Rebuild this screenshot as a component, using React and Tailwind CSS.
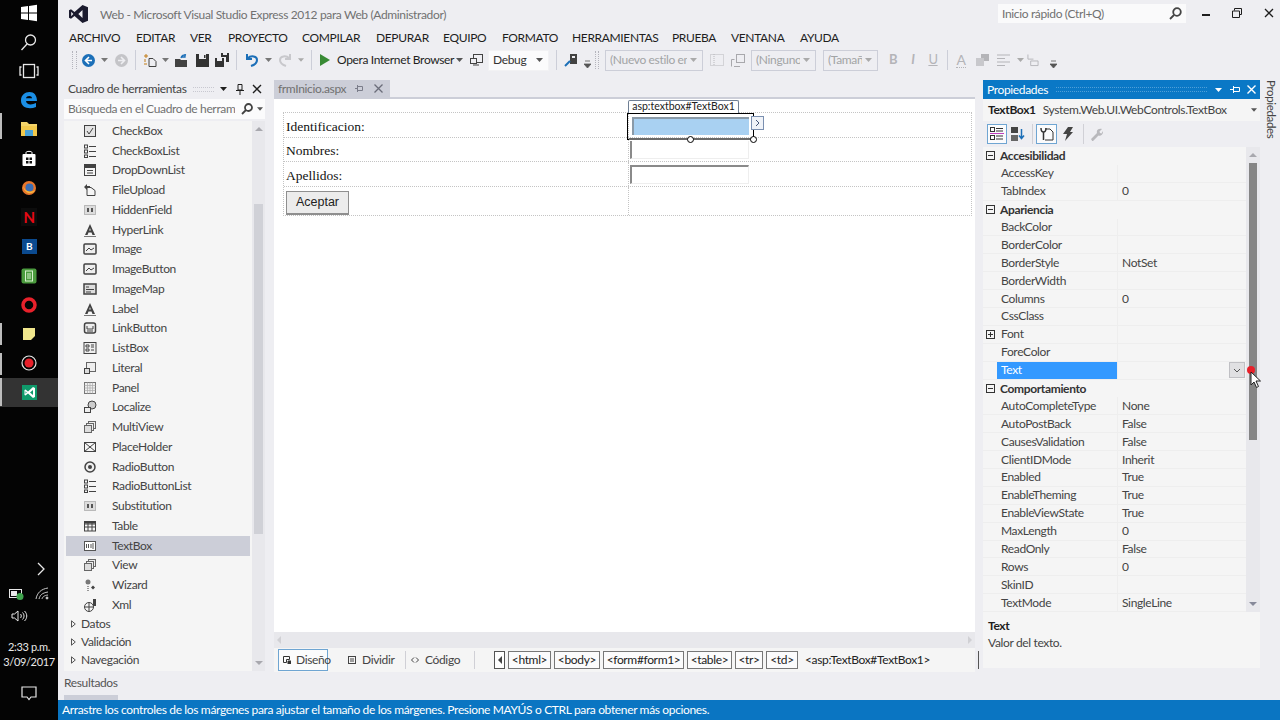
import React from "react";

const FONT = "font-['Lato','Liberation_Sans',sans-serif] tracking-[-0.35px]";

const MENU = [
  ["ARCHIVO", "w-[67px]"],
  ["EDITAR", "w-[54px]"],
  ["VER", "w-[38px]"],
  ["PROYECTO", "w-[74px]"],
  ["COMPILAR", "w-[74px]"],
  ["DEPURAR", "w-[67px]"],
  ["EQUIPO", "w-[59px]"],
  ["FORMATO", "w-[70px]"],
  ["HERRAMIENTAS", "w-[100px]"],
  ["PRUEBA", "w-[59px]"],
  ["VENTANA", "w-[69px]"],
  ["AYUDA", "w-[50px]"],
];

const TOOLS = [
  ["CheckBox", "check"], ["CheckBoxList", "list"], ["DropDownList", "drop"], ["FileUpload", "upload"],
  ["HiddenField", "hidden"], ["HyperLink", "letter"], ["Image", "image"], ["ImageButton", "image"],
  ["ImageMap", "map"], ["Label", "letter"], ["LinkButton", "link"], ["ListBox", "listbox"],
  ["Literal", "literal"], ["Panel", "panel"], ["Localize", "localize"], ["MultiView", "multi"],
  ["PlaceHolder", "place"], ["RadioButton", "radio"], ["RadioButtonList", "list"], ["Substitution", "hidden"],
  ["Table", "table"], ["TextBox", "textbox"], ["View", "multi"], ["Wizard", "wizard"], ["Xml", "xml"],
];

const PROPS = [
  { cat: "Accesibilidad" }, { n: "AccessKey" }, { n: "TabIndex", v: "0" },
  { cat: "Apariencia" }, { n: "BackColor" }, { n: "BorderColor" }, { n: "BorderStyle", v: "NotSet" },
  { n: "BorderWidth" }, { n: "Columns", v: "0" }, { n: "CssClass" }, { n: "Font", plus: true },
  { n: "ForeColor" }, { n: "Text", sel: true },
  { cat: "Comportamiento" }, { n: "AutoCompleteType", v: "None" }, { n: "AutoPostBack", v: "False" },
  { n: "CausesValidation", v: "False" }, { n: "ClientIDMode", v: "Inherit" }, { n: "Enabled", v: "True" },
  { n: "EnableTheming", v: "True" }, { n: "EnableViewState", v: "True" }, { n: "MaxLength", v: "0" },
  { n: "ReadOnly", v: "False" }, { n: "Rows", v: "0" }, { n: "SkinID" }, { n: "TextMode", v: "SingleLine" },
];

const TRAIL = [
  ["<html>", "w-[43px]"], ["<body>", "w-[46px]"], ["<form#form1>", "w-[81px]"],
  ["<table>", "w-[45px]"], ["<tr>", "w-[28px]"], ["<td>", "w-[32px]"],
];

const ToolIcon = ({ type }) => {
  const c = "#424242";
  const shapes = {
    check: <><rect x="2.5" y="2.5" width="11" height="11" fill="#e4e4e4" stroke={c} /><path d="M5 8l2 3 4-6" fill="none" stroke={c} /></>,
    list: <><rect x="2.5" y="2" width="3" height="3" fill="none" stroke={c} /><rect x="2.5" y="7" width="3" height="3" fill="none" stroke={c} /><rect x="2.5" y="12" width="3" height="2.5" fill="none" stroke={c} /><path d="M7 3.5h7M7 8.5h7M7 13.5h7" stroke={c} /></>,
    drop: <><rect x="2.5" y="2.5" width="11" height="11" fill="none" stroke={c} /><rect x="2.5" y="2.5" width="11" height="3.5" fill={c} /><path d="M5 8.5h6M5 11h6" stroke={c} /></>,
    upload: <><path d="M5 5.5h4l4 3v5H5z" fill="none" stroke={c} /><path d="M2 5l3-3v2h3v2H5v2z" fill={c} /></>,
    hidden: <><rect x="2.5" y="3.5" width="11" height="9" fill="#ddd" stroke="#888" strokeDasharray="1 1" /><path d="M5 6h2v4H5zM9 6h2v4H9z" fill="#555" /></>,
    letter: <><path d="M8 2L3 13h2.5l1-2.5h3l1 2.5H13zM7.2 8.5L8 6l.8 2.5z" fill={c} /><path d="M2 14.5h12" stroke="#777" /></>,
    image: <><rect x="2" y="3" width="12" height="10" rx="1" fill="#eee" stroke={c} strokeWidth="1.5" /><path d="M4 10l3-3 2 2 3-2" fill="none" stroke={c} /></>,
    map: <><rect x="2" y="3" width="12" height="10" fill="#ddd" stroke={c} strokeWidth="1.5" /><path d="M4 6h3M4 8.5h8M4 11h5" stroke={c} /></>,
    link: <><rect x="2.5" y="3" width="11" height="10" rx="2" fill="#eee" stroke={c} strokeWidth="1.5" /><path d="M5 6v3h6V6M5 11h6" fill="none" stroke={c} /></>,
    listbox: <><rect x="2" y="2.5" width="12" height="11" fill="#eee" stroke={c} /><path d="M4 5h3v2H4zM4 9h3v2H4zM9 5h3M9 7h3M9 10h3" fill="none" stroke={c} /></>,
    literal: <><rect x="4.5" y="2.5" width="9" height="9" fill="#eee" stroke="#666" /><rect x="2.5" y="8.5" width="5" height="5" fill="#ddd" stroke={c} /></>,
    panel: <><rect x="2.5" y="2.5" width="11" height="11" fill="#eee" stroke="#777" /><path d="M2.5 5.5h11M2.5 8h11M2.5 10.5h11M5.5 2.5v11M8 2.5v11M10.5 2.5v11" stroke="#aaa" strokeWidth=".7" /></>,
    localize: <><circle cx="10" cy="6" r="4" fill="#ccc" stroke={c} /><rect x="2.5" y="8.5" width="6" height="5" fill="#eee" stroke={c} /></>,
    multi: <><rect x="6.5" y="2.5" width="7" height="7" fill="#eee" stroke="#666" /><rect x="4.5" y="4.5" width="7" height="7" fill="#eee" stroke="#666" /><rect x="2.5" y="6.5" width="7" height="7" fill="#ddd" stroke="#666" /></>,
    place: <><rect x="2.5" y="3.5" width="11" height="9" fill="none" stroke={c} /><path d="M2.5 3.5l11 9M13.5 3.5l-11 9" stroke={c} /></>,
    radio: <><circle cx="8" cy="8" r="5" fill="#eee" stroke={c} strokeWidth="1.5" /><circle cx="8" cy="8" r="2" fill={c} /></>,
    table: <><rect x="2.5" y="3.5" width="11" height="9.5" fill="none" stroke={c} /><path d="M2.5 6h11M2.5 9h11M6 4v9M10 4v9" stroke={c} /><rect x="2.5" y="3.5" width="11" height="2" fill={c} /></>,
    textbox: <><rect x="2.5" y="3.5" width="11" height="9" fill="#fff" stroke="#555" /><path d="M4.5 6v4M6.5 6v4M9 6v4M11 5v6" stroke="#555" /></>,
    wizard: <><circle cx="6" cy="5" r="2.5" fill="#777" /><path d="M6 9v5" stroke="#777" strokeWidth="1.5" strokeDasharray="1 1" /><path d="M11 8.5l2 2-2 2-2-2z" fill={c} /></>,
    xml: <><circle cx="7" cy="10" r="4.5" fill="none" stroke={c} /><path d="M2.5 10h9M7 5.5v9" stroke={c} /><rect x="11" y="2" width="3" height="7" fill={c} /></>,
  };
  return (
    <svg width="16" height="16" viewBox="0 0 16 16" className="shrink-0">
      {shapes[type]}
    </svg>
  );
};

// small slot of the taskbar
const TaskIcon = ({ children, active }) => (
  <div className={`h-[29.23px] w-full flex items-center justify-center ${active ? "bg-[#333333]" : ""}`}>
    {children}
  </div>
);

const Drop = ({ color = "#555555" }) => (
  <svg width="7" height="4" viewBox="0 0 7 4"><path d="M0 0h7L3.500 4z" fill={color} /></svg>
);

// slot of the main toolbar
const Tb = ({ w, children }) => (
  <div className={`${w} h-full shrink-0 flex items-center justify-center`}>{children}</div>
);

const Sep = ({ w }) => (
  <div className={`${w} h-full shrink-0 flex items-center justify-center`}>
    <div className="w-px h-[20px] bg-[#ccced8]" />
  </div>
);

const Grip = ({ w }) => (
  <div className={`${w} h-full shrink-0 flex items-center justify-center`}>
    <div className="w-[5px] h-[18px] border-x border-dotted border-[#b4b4bc]" />
  </div>
);

const Combo = ({ w, text, disabled, extra = "" }) => (
  <div className={`${w} ${extra} h-[21px] shrink-0 flex items-center pl-[4px] pr-[5px] border ${disabled ? "border-[#ccced8] text-[#a2a4a5]" : "border-[#f2f2f4] bg-[#fbfbfc] text-[#333333]"}`}>
    <span className="flex-1 min-w-0 overflow-hidden whitespace-nowrap">{text}</span>
    <span className="ml-[3px] flex"><Drop color={disabled ? "#aaaaaa" : "#555555"} /></span>
  </div>
);

const Sidebar = () => (
  <div className="w-[58px] h-full shrink-0 bg-[#040404] flex flex-col text-white relative">
    <div className="-mt-[2px]">
      <TaskIcon>
        <svg width="18" height="18" viewBox="0 0 18 18"><path d="M1 3l7-1v6.500H1zM9 1.900l8-1.200V8.500H9zM1 9.500h7V16l-7-1zM9 9.500h8v7.800l-8-1.200z" fill="#ffffff" /></svg>
      </TaskIcon>
      <TaskIcon>
        <svg width="18" height="18" viewBox="0 0 18 18" fill="none" stroke="#e8e8e8" strokeWidth="1.300"><circle cx="10.500" cy="7" r="5" /><path d="M7 11l-5.500 6" /></svg>
      </TaskIcon>
      <TaskIcon>
        <svg width="20" height="16" viewBox="0 0 20 16" fill="none" stroke="#e8e8e8" strokeWidth="1.300"><rect x="4.500" y="1.500" width="11" height="13" /><path d="M2.500 4H1v8h1.500M17.500 4H19v8h-1.500" /></svg>
      </TaskIcon>
      <TaskIcon>
        <svg width="18" height="18" viewBox="0 0 18 18"><path d="M1 9.500C1 4 5 1 9.500 1 14 1 17 4.300 17 10H6c.3 3.500 5 4.500 10 2v4c-6 2.500-15 1.500-15-6.500zM6 7.300h6c0-3-5.500-3-6 0z" fill="#1b8fe6" /></svg>
      </TaskIcon>
      <TaskIcon>
        <svg width="18" height="16" viewBox="0 0 18 16"><path d="M1 1h6l2 2h8v3H1z" fill="#f4d46a" /><rect x="1" y="5" width="16" height="10" fill="#f2c94c" /><rect x="5" y="9" width="8" height="6" fill="#4aa3d8" /></svg>
      </TaskIcon>
      <TaskIcon>
        <svg width="16" height="17" viewBox="0 0 16 17"><path d="M5 4V2.500C5 1 11 1 11 2.500V4" fill="none" stroke="#ffffff" /><rect x="1.500" y="4" width="13" height="12" rx="1" fill="#ffffff" /><path d="M5 7.500h2.500V10H5zM8.500 7.500H11V10H8.500zM5 11h2.500v2.500H5zM8.500 11H11v2.500H8.500z" fill="#111111" /></svg>
      </TaskIcon>
      <TaskIcon>
        <svg width="16" height="16" viewBox="0 0 16 16"><circle cx="8" cy="8" r="7" fill="#e8762c" /><circle cx="8.500" cy="7.500" r="4" fill="#3b6fb5" /><path d="M2 5c1 5 6 9 12 5-2 5-11 5-12-5z" fill="#f6b73c" /></svg>
      </TaskIcon>
      <TaskIcon>
        <div className="w-[16px] h-[18px] bg-[#0c0c0c] flex items-center justify-center text-[#e50914] text-[15px] font-bold leading-none">N</div>
      </TaskIcon>
      <TaskIcon>
        <div className="w-[15px] h-[15px] bg-[#0b4a8f] flex items-center justify-center text-white text-[10px] font-bold leading-none">B</div>
      </TaskIcon>
      <TaskIcon>
        <svg width="16" height="16" viewBox="0 0 16 16"><rect x="0.500" y="0.500" width="15" height="15" rx="2" fill="#4b9b3e" /><rect x="4.500" y="3" width="7" height="10" fill="none" stroke="#d9f0d0" /><path d="M6 6h4M6 8h4M6 10h4" stroke="#d9f0d0" /></svg>
      </TaskIcon>
      <TaskIcon>
        <svg width="16" height="16" viewBox="0 0 16 16"><circle cx="8" cy="8" r="6" fill="none" stroke="#e8212b" strokeWidth="3.500" /></svg>
      </TaskIcon>
      <TaskIcon>
        <svg width="13" height="13" viewBox="0 0 13 13"><path d="M0 0h12v8l-4 4H0z" fill="#f0e68c" /></svg>
      </TaskIcon>
      <TaskIcon>
        <svg width="16" height="16" viewBox="0 0 16 16"><circle cx="8" cy="8" r="7" fill="none" stroke="#e8e8e8" strokeWidth="1.200" /><circle cx="8" cy="8" r="4.500" fill="#e8202a" /></svg>
      </TaskIcon>
      <TaskIcon active>
        <svg width="15" height="15" viewBox="0 0 15 15"><rect width="15" height="15" fill="#0f9a6b" /><path d="M11 2L6 6.500 3.500 4.500 2.500 5v5l1 .5L6 8.500l5 4.500 2-1V3zM11 5v5L8 7.500zM3.500 6.300l1.300 1.200-1.300 1.200z" fill="#ffffff" /></svg>
      </TaskIcon>
    </div>

    {/* running indicators */}
    <div className="absolute left-0 top-[113px] w-[2px] h-[26px] bg-[#bdbdbd]" />
    <div className="absolute left-0 top-[323px] w-[2px] h-[22px] bg-[#bdbdbd]" />
    <div className="absolute left-0 top-[353px] w-[2px] h-[22px] bg-[#bdbdbd]" />
    <div className="absolute left-0 top-[378px] w-[2px] h-[28px] bg-[#bdbdbd]" />

    {/* tray */}
    <div className="mt-auto flex flex-col items-center pb-[19px]">
      <svg width="10" height="14" viewBox="0 0 10 14" className="ml-[24px]" fill="none" stroke="#e8e8e8" strokeWidth="1.300"><path d="M2 1l6 6-6 6" /></svg>
      <div className="flex items-center gap-[10px] mt-[11px]">
        <svg width="16" height="12" viewBox="0 0 16 12"><rect x="0.500" y="1.500" width="12" height="8" fill="none" stroke="#e8e8e8" /><rect x="2" y="3" width="6" height="5" fill="#e8e8e8" /><circle cx="11" cy="8.500" r="3.500" fill="#3fa34d" /></svg>
        <svg width="14" height="13" viewBox="0 0 14 13" fill="none" stroke="#c8c8c8"><path d="M1 12C2 6 6 2 13 1M4 12c1-4 3-6 9-7M7 12c.5-2 2-3.500 6-4" /><circle cx="12" cy="11" r="1" fill="#e8e8e8" /></svg>
      </div>
      <svg width="17" height="14" viewBox="0 0 17 14" className="mt-[9px] mr-[20px]" fill="none" stroke="#e8e8e8"><path d="M1 5h2.500L7 2v10L3.500 9H1zM9.500 5c1 1 1 3 0 4M11.500 3.500c2 2 2 5 0 7M13.500 2c3 3 3 7 0 10" /></svg>
      <div className="text-[11px] leading-[15px] text-[#e8e8e8] mt-[16px] text-center whitespace-nowrap">
        <div>2:33 p.m.</div>
        <div>3/09/2017</div>
      </div>
      <svg width="16" height="15" viewBox="0 0 16 15" className="mt-[17px]" fill="none" stroke="#e8e8e8" strokeWidth="1.200"><path d="M1 1h14v10h-5l-2 2.500L6 11H1z" /></svg>
    </div>
  </div>
);

const TitleBar = () => (
  <div className="h-[27px] flex items-center shrink-0">
    <svg width="19" height="18" viewBox="0 0 19 18" className="ml-[11px]">
      <path d="M13.500 0L19 2.300v13.400L13.500 18 5.500 11 2 13.800 0 12.800V5.200l2-1L5.500 7zM13.500 5L9.300 9l4.200 4zM2.200 6.800v4.400L4.300 9z" fill="#1a1a2e" />
    </svg>
    <span className="ml-[12px] mt-[2px] text-[12px] text-[#717171]">Web - Microsoft Visual Studio Express 2012 para Web (Administrador)</span>
    <div className="ml-auto w-[188px] h-[19px] bg-[#fafafb] flex items-center px-[4px] text-[12px] text-[#717171]">
      <span className="flex-1">Inicio rápido (Ctrl+Q)</span>
      <svg width="13" height="13" viewBox="0 0 13 13" fill="none" stroke="#444444" strokeWidth="1.800"><circle cx="8" cy="5" r="3.800" /><path d="M5 8l-4 4" /></svg>
    </div>
    <div className="w-[94px] h-full flex items-center -mt-[1px]">
      <div className="w-[8px] h-[2px] bg-[#1e1e1e] ml-[16px] mt-[3px]" />
      <svg width="10" height="10" viewBox="0 0 10 10" className="ml-[22px]" fill="none" stroke="#1e1e1e"><path d="M2.500 2.500v-2h7v6h-2M.5 3h7v6.500h-7z" /></svg>
      <svg width="10" height="10" viewBox="0 0 10 10" className="ml-[22px]" fill="none" stroke="#1e1e1e" strokeWidth="1.300"><path d="M1 1l8 8M9 1l-8 8" /></svg>
    </div>
  </div>
);

const MenuBar = () => (
  <div className="h-[20px] shrink-0 flex items-center pl-[11px] pt-[2px] text-[12px] text-[#1e1e1e]">
    {MENU.map(([label, w]) => (
      <div key={label} className={`${w} shrink-0 whitespace-nowrap`}>{label}</div>
    ))}
  </div>
);

const Toolbar = () => (
  <div className="h-[26px] shrink-0 flex items-center pl-[10px] text-[12px]">
    <Grip w="w-[12px]" />
    <Tb w="w-[16px]">
      <svg width="13" height="13" viewBox="0 0 13 13"><circle cx="6.500" cy="6.500" r="6.500" fill="#1c6fb8" /><path d="M7 3L3.500 6.500 7 10M4 6.500h6" fill="none" stroke="#ffffff" strokeWidth="1.600" /></svg>
    </Tb>
    <Tb w="w-[16px]"><Drop color="#777777" /></Tb>
    <Tb w="w-[18px]">
      <svg width="13" height="13" viewBox="0 0 13 13"><circle cx="6.500" cy="6.500" r="6.500" fill="#c4c4c8" /><path d="M6 3l3.500 3.500L6 10M9 6.500H3" fill="none" stroke="#eeeef2" strokeWidth="1.600" /></svg>
    </Tb>
    <Sep w="w-[10px]" />
    <Tb w="w-[20px]">
      <svg width="14" height="14" viewBox="0 0 14 14" fill="none" stroke="#424242"><path d="M6 5.500h4l3 3v5H6z" /><path d="M1 3h4M3 1v4M2 6v3M1 11h3" stroke="#c27d16" /></svg>
    </Tb>
    <Tb w="w-[10px]"><Drop color="#777777" /></Tb>
    <Tb w="w-[22px]">
      <svg width="14" height="13" viewBox="0 0 14 13"><path d="M1 5h5l1 1h6v7H1z" fill="#424242" /><path d="M7 4a4 4 0 0 1 5-3M11 0v3H8" fill="none" stroke="#1c6fb8" strokeWidth="1.300" /></svg>
    </Tb>
    <Tb w="w-[20px]">
      <svg width="13" height="13" viewBox="0 0 13 13"><path d="M0 0h13v13H0z" fill="#333333" /><path d="M3 0h7v5H3z" fill="#eeeef2" /><path d="M8 1h1.500v3H8zM3 9h7v4H3z" fill="#333333" /></svg>
    </Tb>
    <Tb w="w-[20px]">
      <svg width="14" height="14" viewBox="0 0 14 14"><path d="M0 5h9v9H0z" fill="#333333" /><path d="M2 5h5v3H2z" fill="#eeeef2" /><path d="M6 0h8v9h-3V4H6z" fill="#333333" /><path d="M8 0h4v2H8z" fill="#eeeef2" /></svg>
    </Tb>
    <Sep w="w-[8px]" />
    <Tb w="w-[24px]">
      <svg width="14" height="14" viewBox="0 0 14 14" fill="none" stroke="#1c6fb8" strokeWidth="2"><path d="M2 1v5h5" /><path d="M2.500 5.500C6 2 12 3 12 7c0 3-3 5-6 6" /></svg>
    </Tb>
    <Tb w="w-[8px]"><Drop color="#777777" /></Tb>
    <Tb w="w-[26px]">
      <svg width="14" height="14" viewBox="0 0 14 14" fill="none" stroke="#c8c8cc" strokeWidth="2"><path d="M12 1v5H7" /><path d="M11.500 5.500C8 2 2 3 2 7c0 3 3 5 6 6" /></svg>
    </Tb>
    <Tb w="w-[6px]"><Drop color="#aaaaaa" /></Tb>
    <Sep w="w-[14px]" />
    <Tb w="w-[14px]">
      <svg width="10" height="12" viewBox="0 0 10 12"><path d="M0 0l10 6-10 6z" fill="#388a34" /></svg>
    </Tb>
    <div className="w-[114px] ml-[5px] shrink-0 whitespace-nowrap text-[#1e1e1e]">Opera Internet Browser</div>
    <Tb w="w-[16px]"><Drop /></Tb>
    <Tb w="w-[18px]">
      <svg width="13" height="12" viewBox="0 0 13 12" fill="none" stroke="#424242"><rect x="3.500" y="0.500" width="9" height="8" /><rect x="0.500" y="4.500" width="6" height="5" fill="#eeeef2" /><path d="M3 11h6" /></svg>
    </Tb>
    <Combo w="w-[61px]" extra="ml-[3px]" text="Debug" />
    <Sep w="w-[14px]" />
    <Tb w="w-[16px]">
      <svg width="14" height="14" viewBox="0 0 14 14"><path d="M6 1h7v10H6z" fill="#424242" /><path d="M1 13l5-5" stroke="#1c6fb8" strokeWidth="2" /><path d="M8 3h3v2H8z" fill="#eeeef2" /></svg>
    </Tb>
    <Tb w="w-[16px]">
      <svg width="7" height="8" viewBox="0 0 7 8" className="mt-[8px]"><path d="M1 1h5M0 4h7L3.500 8z" stroke="#555555" fill="#555555" strokeWidth=".8" /></svg>
    </Tb>
    <Grip w="w-[4px]" />
    <Combo w="w-[98px]" extra="ml-[6px]" text="(Nuevo estilo en" disabled />
    <Tb w="w-[28px]">
      <svg width="14" height="12" viewBox="0 0 14 12" fill="none" stroke="#b8b8bc" strokeDasharray="1 1"><rect x="0.500" y="0.500" width="13" height="11" /><path d="M4 0v12" /></svg>
    </Tb>
    <Tb w="w-[14px]">
      <svg width="14" height="13" viewBox="0 0 14 13" fill="none" stroke="#a8a8ac"><rect x="5.500" y="0.500" width="8" height="8" /><path d="M0.500 12.500v-7h3M3 12.500h6" /></svg>
    </Tb>
    <Combo w="w-[65px]" extra="ml-[6px]" text="(Ninguno)" disabled />
    <Combo w="w-[55px]" extra="ml-[7px]" text="(Tamaño" disabled />
    <div className="w-[5px] shrink-0" />
    <Tb w="w-[20px]"><span className="font-bold text-[13px] text-[#b4b4b8]">B</span></Tb>
    <Tb w="w-[20px]"><span className="italic font-bold text-[13px] text-[#b4b4b8]">I</span></Tb>
    <Tb w="w-[20px]"><span className="underline text-[13px] text-[#b4b4b8]">U</span></Tb>
    <Sep w="w-[8px]" />
    <Tb w="w-[20px]"><span className="text-[14px] text-[#b4b4b8] border-b border-dotted border-[#b4b4b8] leading-[15px]">A</span></Tb>
    <Tb w="w-[22px]">
      <svg width="13" height="12" viewBox="0 0 13 12"><rect x="5" y="0" width="8" height="7" fill="#b4b4b8" /><rect x="0" y="4" width="8" height="8" fill="#c8c8cc" /></svg>
    </Tb>
    <Tb w="w-[20px]">
      <svg width="13" height="12" viewBox="0 0 13 12" stroke="#b4b4b8"><path d="M0 1h13M0 4.500h8M0 8h13M0 11.500h8" /></svg>
    </Tb>
    <Tb w="w-[14px]"><Drop color="#aaaaaa" /></Tb>
    <Tb w="w-[12px]">
      <svg width="13" height="13" viewBox="0 0 13 13" fill="none" stroke="#b4b4b8"><path d="M1 0v5h6M4 7h8v5H4z" /></svg>
    </Tb>
    <div className="w-[6px] shrink-0" />
    <Tb w="w-[16px]">
      <svg width="7" height="8" viewBox="0 0 7 8" className="mt-[8px]"><path d="M1 1h5M0 4h7L3.500 8z" stroke="#555555" fill="#555555" strokeWidth=".8" /></svg>
    </Tb>
  </div>
);

const ToolboxPanel = () => (
  <div className="w-[201px] ml-[6px] shrink-0 flex flex-col text-[12px] text-[#444444]">
    <div className="h-[18px] shrink-0 flex items-center pl-[4px] pr-[3px] text-[#444444]">
      <span className="whitespace-nowrap">Cuadro de herramientas</span>
      <div className="flex-1 h-[5px] mx-[6px] border-y border-dotted border-[#c8c8d0]" />
      <svg width="7" height="4" viewBox="0 0 7 4"><path d="M0 0h7L3.500 4z" fill="#1e1e1e" /></svg>
      <svg width="8" height="11" viewBox="0 0 8 11" className="ml-[9px]" fill="none" stroke="#1e1e1e"><path d="M2 .5h4V6H2zM0 6.500h8M4 6.500V11" /></svg>
      <svg width="10" height="10" viewBox="0 0 10 10" className="ml-[8px]" fill="none" stroke="#1e1e1e" strokeWidth="1.400"><path d="M1 1l8 8M9 1l-8 8" /></svg>
    </div>
    <div className="h-[20px] mt-px shrink-0 bg-[#fbfbfc] flex items-center pl-[4px] pr-[2px] text-[#717171]">
      <span className="flex-1 whitespace-nowrap overflow-hidden">Búsqueda en el Cuadro de herram</span>
      <svg width="12" height="12" viewBox="0 0 12 12" className="ml-[6px]" fill="none" stroke="#424242" strokeWidth="1.800"><circle cx="7.500" cy="4.500" r="3.500" /><path d="M5 7l-4 4" /></svg>
      <svg width="6" height="4" viewBox="0 0 7 4" className="ml-[4px]"><path d="M0 0h7L3.500 4z" fill="#555555" /></svg>
    </div>
    <div className="h-[550px] mt-[2px] shrink-0 flex bg-[#f5f5f5]">
      <div className="w-[186px] shrink-0 pl-[2px]">
        {TOOLS.map(([name, icon]) => (
          <div key={name} className={`h-[19.75px] flex items-center pl-[16px] ${name === "TextBox" ? "bg-[#ccced8]" : ""}`}>
            <ToolIcon type={icon} />
            <span className="ml-[14px] text-[#444444]">{name}</span>
          </div>
        ))}
        {["Datos", "Validación", "Navegación"].map((g) => (
          <div key={g} className="h-[18px] flex items-center pl-[5px]">
            <svg width="5" height="8" viewBox="0 0 5 8" fill="none" stroke="#555555"><path d="M.5.800L4.300 4 .5 7.200z" /></svg>
            <span className="ml-[5px]">{g}</span>
          </div>
        ))}
      </div>
      <div className="ml-auto w-[13px] bg-[#e8e8ec] flex flex-col items-center">
        <svg width="8" height="4" viewBox="0 0 8 4" className="mt-[6px]"><path d="M0 4h8L4 0z" fill="#a8a8ae" /></svg>
        <div className="w-[9px] h-[330px] mt-[73px] bg-[#d0d1d7]" />
        <svg width="8" height="4" viewBox="0 0 8 4" className="mt-auto mb-[6px]"><path d="M0 0h8L4 4z" fill="#a8a8ae" /></svg>
      </div>
    </div>
    <div className="flex-1 flex flex-col">
      <div className="flex-1 flex items-center text-[#555555]">Resultados</div>
      <div className="w-[54px] h-[5px] bg-[#ccced8]" />
    </div>
  </div>
);

const Designer = () => (
  <div className="h-[533px] shrink-0 bg-white pt-[13px] pl-[9px] relative">
    <div className="w-[689px] border border-dotted border-[#c4c4c4] text-[13.500px] tracking-normal text-[#111111] font-['Liberation_Serif',serif]">
      <div className="flex h-[25px] border-b border-dotted border-[#c4c4c4]">
        <div className="w-[345px] pl-[2px] pt-[4px] flex items-center border-r border-dotted border-[#c4c4c4]">Identificacion:</div>
        <div className="flex-1" />
      </div>
      <div className="flex h-[24px] border-b border-dotted border-[#c4c4c4]">
        <div className="w-[345px] pl-[2px] pt-[4px] flex items-center border-r border-dotted border-[#c4c4c4]">Nombres:</div>
        <div className="flex-1 pl-[1px] pt-[3px]">
          <div className="w-[119px] h-[18px] border-l-2 border-[#8a8a8a] border-r border-b border-r-[#eeeeee] border-b-[#eeeeee]" />
        </div>
      </div>
      <div className="flex h-[25px] border-b border-dotted border-[#c4c4c4]">
        <div className="w-[345px] pl-[2px] pt-[4px] flex items-center border-r border-dotted border-[#c4c4c4]">Apellidos:</div>
        <div className="flex-1 pl-[1px] pt-[3px]">
          <div className="w-[119px] h-[19px] border-l-2 border-t-2 border-[#8a8a8a] border-r border-b border-r-[#eeeeee] border-b-[#eeeeee]" />
        </div>
      </div>
      <div className="flex h-[28px]">
        <div className="w-[345px] pl-[2px] pt-[4px] flex items-center border-r border-dotted border-[#c4c4c4]">
          <div className="w-[63px] h-[24px] bg-[#ececec] border border-[#8f8f8f] border-b-2 flex items-center justify-center text-[12.500px] text-[#222222] font-['Liberation_Sans',sans-serif]">Aceptar</div>
        </div>
        <div className="flex-1" />
      </div>
    </div>

    {/* selection adorners of the designer */}
    <div className="absolute left-[354px] top-[1px] h-[13px] w-[111px] bg-white border border-[#6f7f94] border-b-0 rounded-t-[2px] flex items-center justify-center text-[10.500px] tracking-normal text-[#222222] whitespace-nowrap">asp:textbox#TextBox1</div>
    <div className="absolute left-[353px] top-[14px] w-[127px] h-[27px] border border-black" />
    <div className="absolute left-[358px] top-[18px] w-[117px] h-[18px] bg-[#a9d1f2] border-l-2 border-t-2 border-[#8a9aa8]" />
    <div className="absolute left-[355px] top-[39px] w-[124px] h-[2px] bg-[#6a6a6a]" />
    <div className="absolute left-[477px] top-[17px] w-[13px] h-[14px] bg-[#f0f3f8] border border-[#7a8fb0] flex items-center justify-center">
      <svg width="5" height="8" viewBox="0 0 5 8" fill="none" stroke="#445577"><path d="M1 1l3 3-3 3" /></svg>
    </div>
    <div className="absolute left-[413px] top-[37px] w-[7px] h-[7px] rounded-full bg-white border border-black" />
    <div className="absolute left-[476px] top-[37px] w-[7px] h-[7px] rounded-full bg-white border border-black" />
  </div>
);

const CenterPanel = () => (
  <div className="w-[701px] ml-[9px] shrink-0 flex flex-col text-[12px]">
    <div className="h-[17px] shrink-0 w-[116px] bg-[#ccced8] flex items-center pl-[4px] text-[#707070]">
      <span className="flex-1">frmInicio.aspx</span>
      <svg width="9" height="9" viewBox="0 0 9 9" fill="none" stroke="#7b7d8a"><path d="M0 4.500h2.500M2.500 2.500h5v4h-5zM2.500 1v7" /></svg>
      <svg width="9" height="9" viewBox="0 0 9 9" className="ml-[10px] mr-[7px]" fill="none" stroke="#6b6d7a" strokeWidth="1.300"><path d="M.5.500l8 8M8.500.500l-8 8" /></svg>
    </div>
    <div className="h-[2px] shrink-0 bg-[#ccced8]" />
    <Designer />
    <div className="h-[16px] shrink-0 bg-[#e8e8ec] flex items-center justify-between px-[3px]">
      <svg width="4" height="8" viewBox="0 0 4 8"><path d="M4 0v8L0 4z" fill="#d0d0d4" /></svg>
      <svg width="4" height="8" viewBox="0 0 4 8"><path d="M0 0v8l4-4z" fill="#d0d0d4" /></svg>
    </div>
    <div className="h-[24px] shrink-0 bg-[#f5f5f5] flex items-center pl-[4px] text-[#444444] whitespace-nowrap">
      <div className="w-[50px] h-[22px] shrink-0 bg-[#fbfbfc] border border-[#6fa5d2] flex items-center pl-[4px]">
        <svg width="8" height="8" viewBox="0 0 8 8" className="shrink-0" fill="none" stroke="#333333"><path d="M.5.500h6v3h-3v3h-3z" /><path d="M5 5h3v3H5z" fill="#333333" /></svg>
        <span className="ml-[5px]">Diseño</span>
      </div>
      <svg width="8" height="8" viewBox="0 0 8 8" className="ml-[20px] shrink-0" fill="none" stroke="#444444"><rect x=".5" y=".5" width="7" height="7" /><path d="M2 3h4M2 5h4" /></svg>
      <span className="ml-[6px] w-[33px] shrink-0">Dividir</span>
      <div className="w-px h-[18px] bg-[#d0d0d6] ml-[10px] shrink-0" />
      <svg width="8" height="6" viewBox="0 0 8 6" className="ml-[5px] shrink-0" fill="none" stroke="#444444"><path d="M3 .5L.5 3 3 5.500M5 .5L7.500 3 5 5.500" /></svg>
      <span className="ml-[6px] w-[37px] shrink-0">Código</span>
      <div className="w-px h-[18px] bg-[#d0d0d6] ml-[12px] shrink-0" />
      <div className="ml-[19px] w-[11px] h-[18px] shrink-0 bg-white border border-[#555555] flex items-center justify-center">
        <svg width="4" height="8" viewBox="0 0 4 8"><path d="M4 0v8L0 4z" fill="#444444" /></svg>
      </div>
      <div className="flex gap-[3px] ml-[3px] text-[12px] shrink-0">
        {TRAIL.map(([t, w]) => (
          <div key={t} className={`${w} h-[18px] border border-[#777777] bg-[#fbfbfc] flex items-center justify-center text-[#222222]`}>{t}</div>
        ))}
      </div>
      <span className="ml-[7px] w-[125px] shrink-0 text-[12px] text-[#222222]">&lt;asp:TextBox#TextBox1&gt;</span>
      <div className="w-px h-[18px] bg-[#555555] ml-[48px] shrink-0" />
    </div>
  </div>
);

const PropertiesPanel = () => (
  <div className="w-[277px] ml-[8px] shrink-0 flex flex-col text-[12px] text-[#333333] relative">
    <div className="h-[19px] shrink-0 bg-[#0a78c6] flex items-center pl-[4px] text-white">
      <span>Propiedades</span>
      <div className="flex-1 h-[5px] mx-[8px] border-y border-dotted border-[#4f9fd8]" />
      <svg width="7" height="4" viewBox="0 0 7 4"><path d="M0 0h7L3.500 4z" fill="#ffffff" /></svg>
      <svg width="11" height="9" viewBox="0 0 11 9" className="ml-[8px]" fill="none" stroke="#ffffff"><path d="M0 4.500h3.500M3.500 2.500h6v4h-6zM3.500 1v7" /></svg>
      <svg width="9" height="9" viewBox="0 0 9 9" className="ml-[6px] mr-[4px]" fill="none" stroke="#ffffff" strokeWidth="1.400"><path d="M.5.500l8 8M8.500.500l-8 8" /></svg>
    </div>
    <div className="h-[22px] shrink-0 bg-[#f5f5f5] flex items-center pl-[5px] pr-[3px] whitespace-nowrap">
      <span className="font-bold text-[#1e1e1e]">TextBox1</span>
      <span className="ml-[7px] flex-1 text-[#444444]">System.Web.UI.WebControls.TextBox</span>
      <svg width="6" height="4" viewBox="0 0 7 4"><path d="M0 0h7L3.500 4z" fill="#555555" /></svg>
    </div>
    <div className="h-[24px] mt-[1px] shrink-0 flex items-center pl-[4px]">
      <div className="w-[20px] h-[20px] bg-[#fbfbfc] border border-[#6fa5d2] flex items-center justify-center">
        <svg width="14" height="14" viewBox="0 0 14 14" fill="none" stroke="#333333"><rect x=".5" y=".5" width="4" height="4" /><rect x=".5" y="8.500" width="4" height="4" /><path d="M6 1.500h7M6 4h7M6 9h7M6 12h7" /><path d="M0 6.500h14" stroke="#c040c0" /></svg>
      </div>
      <div className="w-[22px] flex justify-center">
        <svg width="14" height="14" viewBox="0 0 14 14"><rect x="0" y="0" width="7" height="6" fill="#444444" /><rect x="0" y="8" width="7" height="6" fill="#666666" /><path d="M10.500 2v9M8 8.500l2.500 3 2.500-3" fill="none" stroke="#1c6fb8" strokeWidth="1.500" /></svg>
      </div>
      <div className="w-px h-[20px] bg-[#d0d0d6] ml-[3px]" />
      <div className="w-[21px] h-[20px] ml-[3px] bg-[#fbfbfc] border border-[#6fa5d2] flex items-center justify-center">
        <svg width="14" height="14" viewBox="0 0 14 14" fill="none" stroke="#333333"><path d="M5 2h5l3 3v8H5" /><path d="M1 1c0 3 1 4 2.500 4S6 4 6 1M3.500 5v8" strokeWidth="1.500" /></svg>
      </div>
      <div className="w-[22px] flex justify-center">
        <svg width="10" height="14" viewBox="0 0 10 14"><path d="M5 0h5L7 5h3L2 14l2-7H0z" fill="#444444" /></svg>
      </div>
      <div className="w-px h-[20px] bg-[#d0d0d6] ml-[4px]" />
      <div className="w-[22px] ml-[1px] flex justify-center">
        <svg width="13" height="13" viewBox="0 0 13 13"><path d="M1 11l6-6c-1-3 2-5 5-4L9.500 3.500 10 5l1.500.5L13 3c.5 3-2 5.500-4.500 4.500l-6 6z" fill="#b8b8bc" /></svg>
      </div>
    </div>
    <div className="h-[465px] mt-[1px] shrink-0 flex bg-[#f5f5f5]">
      <div className="w-[263px] shrink-0">
        {PROPS.map((p) =>
          p.cat ? (
            <div key={p.cat} className="h-[17.900px] flex items-center">
              <div className="w-[14px] flex justify-center">
                <svg width="9" height="9" viewBox="0 0 9 9" fill="none" stroke="#333333"><rect x=".5" y=".5" width="8" height="8" /><path d="M2 4.500h5" /></svg>
              </div>
              <span className="ml-[3px] font-bold text-[#333333]">{p.cat}</span>
            </div>
          ) : (
            <div key={p.n} className="h-[17.900px] flex items-center border-b border-[#eeeeee]">
              <div className="w-[14px] flex justify-center">
                {p.plus && (
                  <svg width="9" height="9" viewBox="0 0 9 9" fill="none" stroke="#333333"><rect x=".5" y=".5" width="8" height="8" /><path d="M2 4.500h5M4.500 2v5" /></svg>
                )}
              </div>
              <div className={`w-[121px] h-full flex items-center pl-[4px] border-r border-[#eeeeee] ${p.sel ? "bg-[#3399ff] text-white" : "text-[#444444]"}`}>{p.n}</div>
              <div className="flex-1 pl-[4px] text-[#444444] flex items-center">
                {p.v}
                {p.sel && (
                  <div className="ml-auto mr-[1px] w-[16px] h-[16px] bg-[#e0e0e2] border border-[#c0c0c4] flex items-center justify-center">
                    <svg width="8" height="5" viewBox="0 0 8 5" fill="none" stroke="#555555"><path d="M1 1l3 3 3-3" /></svg>
                  </div>
                )}
              </div>
            </div>
          )
        )}
      </div>
      <div className="w-[14px] bg-[#e8e8ec] flex flex-col items-center">
        <svg width="8" height="4" viewBox="0 0 8 4" className="mt-[6px]"><path d="M0 4h8L4 0z" fill="#a8a8ae" /></svg>
        <div className="w-[8px] h-[277px] mt-[6px] bg-[#858585]" />
        <svg width="8" height="4" viewBox="0 0 8 4" className="mt-auto mb-[6px]"><path d="M0 0h8L4 4z" fill="#868999" /></svg>
      </div>
    </div>
    <div className="h-[56px] shrink-0 bg-[#f5f5f5] pl-[5px] pt-[5px] leading-[17px]">
      <div className="font-bold text-[#1e1e1e]">Text</div>
      <div className="text-[#444444]">Valor del texto.</div>
    </div>

    {/* recorder's click marker and mouse pointer */}
    <div className="absolute left-[264px] top-[286px] w-[8px] h-[8px] rounded-full bg-[#e8202a]" />
    <svg width="12" height="18" viewBox="0 0 12 18" className="absolute left-[267px] top-[291px]">
      <path d="M1 1v13l3-3 2.500 5.500 2-1L6 10h4.500z" fill="#ffffff" stroke="#222222" />
    </svg>
  </div>
);

export default function App() {
  return (
    <div className={`w-[1280px] h-[720px] overflow-hidden flex bg-[#eeeef2] ${FONT}`}>
      <Sidebar />
      <div className="flex-1 min-w-0 flex flex-col">
        <TitleBar />
        <MenuBar />
        <Toolbar />
        <div className="h-[7px] shrink-0" />
        <div className="h-[620px] shrink-0 flex">
          <ToolboxPanel />
          <CenterPanel />
          <PropertiesPanel />
          <div className="flex-1 relative">
            <span className="absolute left-[3px] top-0 text-[11.500px] text-[#444444] [writing-mode:vertical-rl] whitespace-nowrap">Propiedades</span>
          </div>
        </div>
        <div className="h-[20px] shrink-0 bg-[#0a75c2] flex items-center pl-[4px] text-[12px] text-white whitespace-nowrap">
          Arrastre los controles de los márgenes para ajustar el tamaño de los márgenes. Presione MAYÚS o CTRL para obtener más opciones.
        </div>
      </div>
    </div>
  );
}
